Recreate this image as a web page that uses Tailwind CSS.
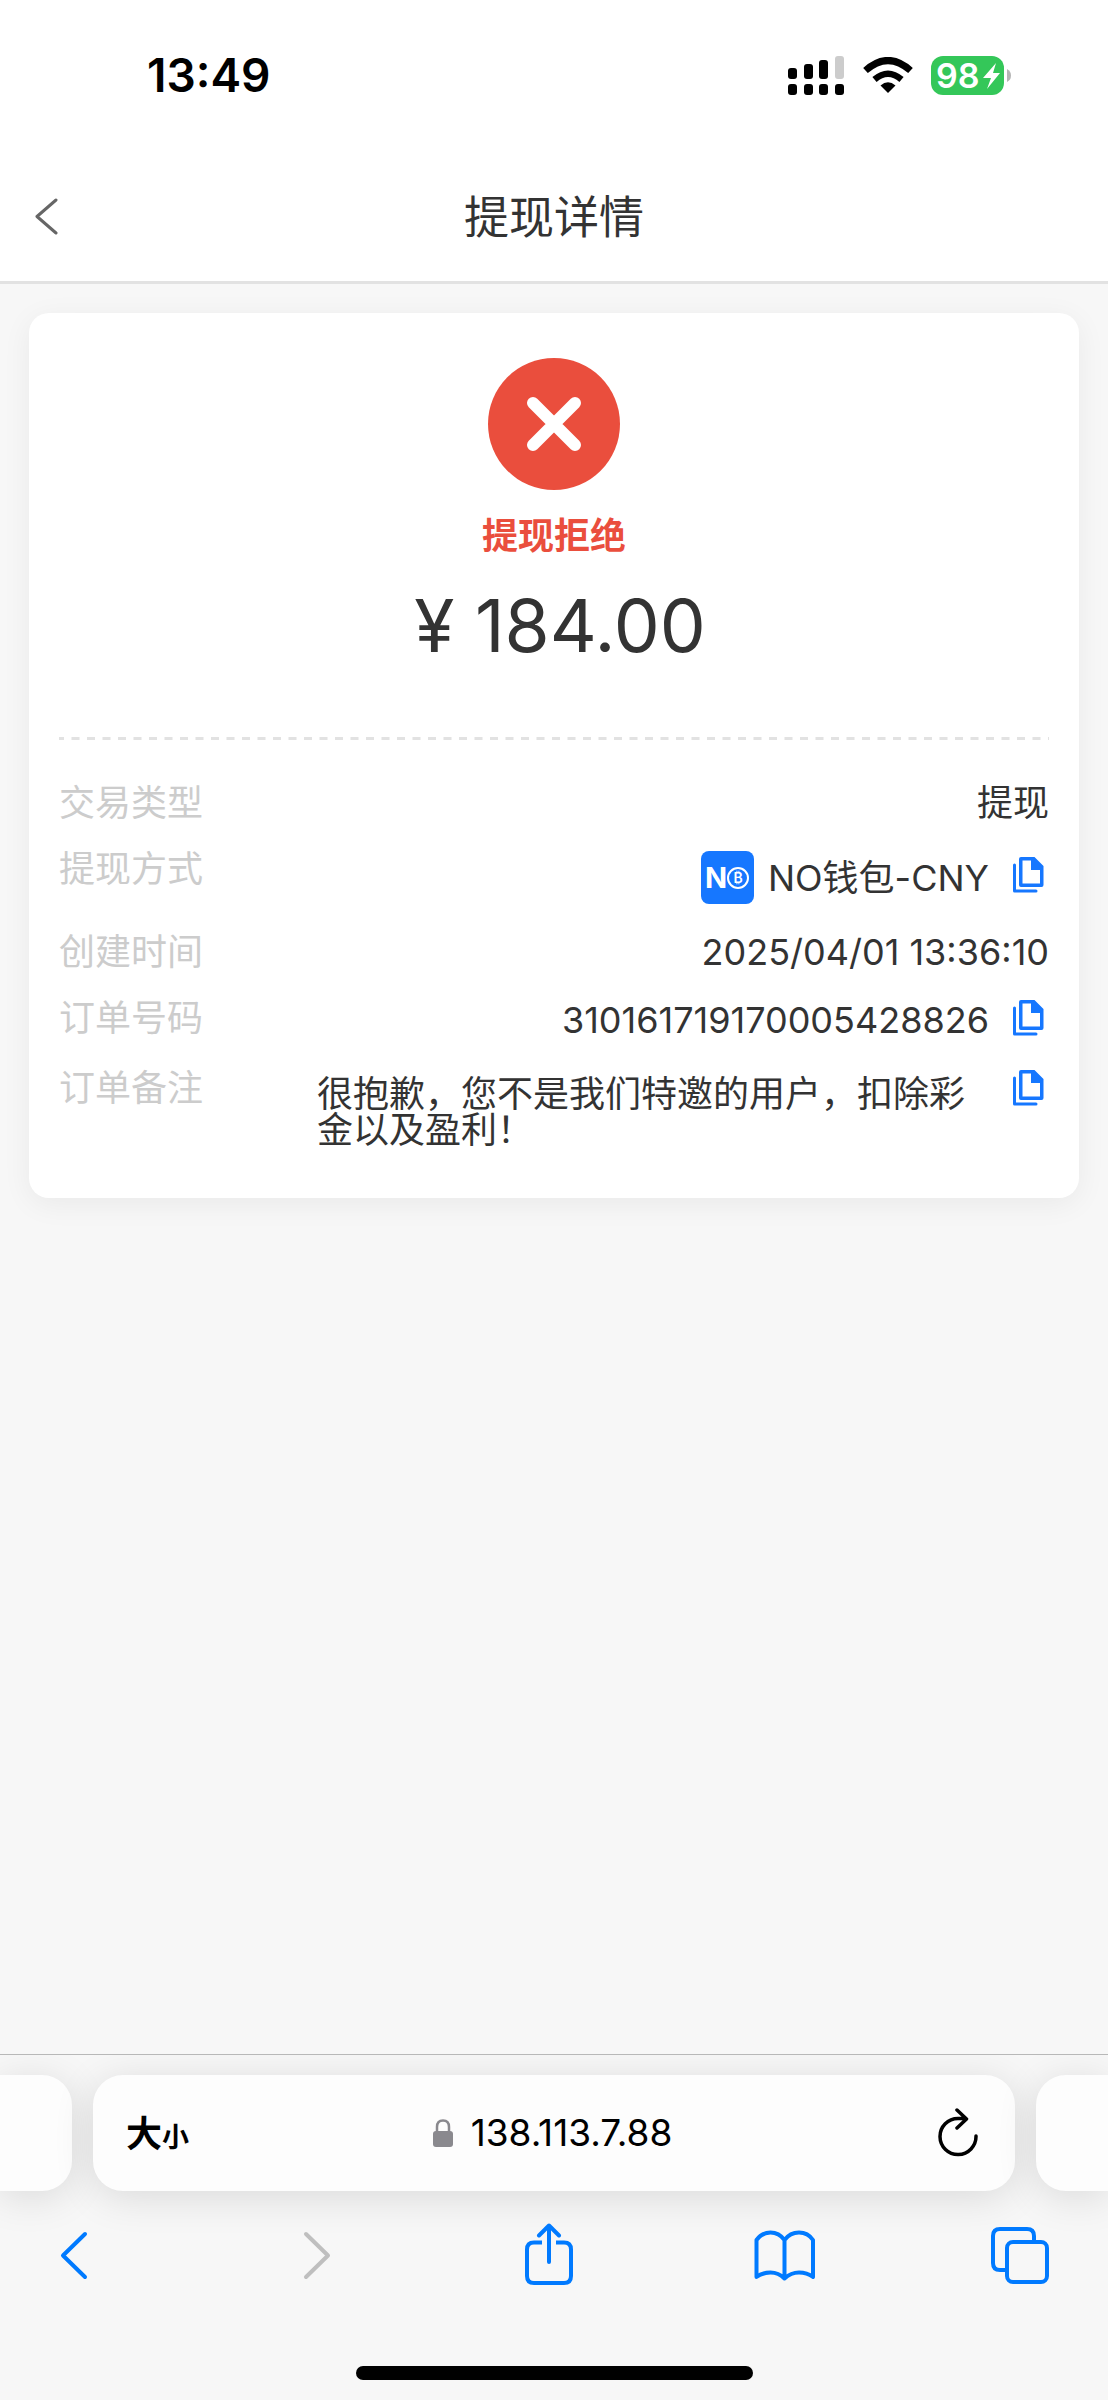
<!DOCTYPE html>
<html lang="zh-CN">
<head>
    <meta charset="UTF-8">
    <meta name="viewport" content="width=device-width, initial-scale=1.0">
    <title>提现详情</title>
    <script src="https://cdn.jsdelivr.net/npm/@tailwindcss/browser@4"></script>
</head>
<body class="bg-[#f7f7f7] font-[Inter,'Noto_Sans_CJK_SC',sans-serif] text-[36px] leading-[36px] text-[#333]">

    <!-- Shared icon shapes -->
    <svg class="hidden">
        <symbol id="copy" viewBox="0 0 36 36">
            <path d="M1.500 8v26h21.500" fill="none" stroke="#1677ff" stroke-width="3" stroke-linejoin="round" stroke-linecap="round"/>
            <path fill="#1677ff" fill-rule="evenodd" d="M8 0h13.500l9 9v19q0 2-2 2H8q-2 0-2-2V2q0-2 2-2zM9.500 3.500v23h17.500V13h-9V3.500z"/>
        </symbol>
    </svg>

    <div class="flex min-h-screen flex-col">

        <!-- Status bar -->
        <div class="flex h-[150px] items-center justify-between bg-white pr-[96px] pl-[147px]">
            <time class="text-[46px] leading-none font-semibold text-black">13:49</time>
            <div class="flex items-center gap-[18px]">
                <svg class="h-[39px] w-[57px]" viewBox="0 0 57 39">
                    <rect x="0" y="12" width="9" height="11" rx="3"/>
                    <rect x="16" y="8" width="9" height="15" rx="3"/>
                    <rect x="31" y="4" width="9" height="19" rx="3"/>
                    <rect x="47" y="0" width="9" height="23" rx="3" fill="#ccc"/>
                    <rect x="0" y="28" width="9" height="11" rx="3"/>
                    <rect x="16" y="28" width="9" height="11" rx="3"/>
                    <rect x="31" y="28" width="9" height="11" rx="3"/>
                    <rect x="47" y="28" width="9" height="11" rx="3"/>
                </svg>
                <svg class="h-[36px] w-[50px]" viewBox="0 0 50 36">
                    <path d="M25 36l-7.500-7.500q7.500-6.500 15 0z"/>
                    <path d="M11.500 22.500q13.500-11.500 27 0" fill="none" stroke="#000" stroke-width="6.500"/>
                    <path d="M2.500 13.500q22.500-20 45 0" fill="none" stroke="#000" stroke-width="7"/>
                </svg>
                <svg class="h-[39px] w-[81px] overflow-visible" viewBox="0 0 81 39">
                    <rect width="73" height="39" rx="12" fill="#34c759"/>
                    <path d="M76 13q4 2 4 6.500t-4 6.500z" fill="#b5b5b5"/>
                    <text x="5" y="32" font-size="34" font-weight="600" fill="#fff">98</text>
                    <path d="M65 7L52 22h8l-4 11 13-16h-7z" fill="#fff"/>
                </svg>
            </div>
        </div>

        <!-- Page header -->
        <header class="grid h-[134px] grid-cols-[80px_1fr_80px] items-center border-b-3 border-[#e2e2e2] bg-white">
            <button type="button" aria-label="返回" class="flex h-full items-center pl-8">
                <svg class="h-[40px] w-[26px]" viewBox="0 0 26 40" fill="none" stroke="#666" stroke-width="3" stroke-linecap="round" stroke-linejoin="round">
                    <path d="M24 4L5 20.500 24 37"/>
                </svg>
            </button>
            <h1 class="pt-1 text-center text-[45px] leading-none">提现详情</h1>
        </header>

        <!-- Detail card -->
        <main class="flex-1 px-[29px] pt-[29px]">
            <section class="rounded-[20px] bg-white px-[30px] pt-[45px] pb-[50px] shadow-[0_6px_30px_rgba(0,0,0,0.06)]">
                <div class="flex flex-col items-center">
                    <svg class="size-[132px]" viewBox="0 0 132 132">
                        <circle cx="66" cy="66" r="66" fill="#ea4e3d"/>
                        <path d="M45 45l42 42M87 45L45 87" stroke="#fff" stroke-width="12" stroke-linecap="round"/>
                    </svg>
                    <p class="mt-7 font-bold text-[#ea4e3d]">提现拒绝</p>
                    <p class="mt-9 pl-3 text-[73px] leading-[72px]">¥ 184.00</p>
                </div>

                <svg class="mt-[75px] h-[3px] w-full" aria-hidden="true">
                    <line x1="0" y1="1.500" x2="100%" y2="1.500" stroke="#e2e2e2" stroke-width="3" stroke-dasharray="8 7.500" stroke-dashoffset="3"/>
                </svg>

                <dl class="mt-[45px] flex flex-col gap-[30px]">
                    <div class="flex justify-between">
                        <dt class="text-[#ccc]">交易类型</dt>
                        <dd>提现</dd>
                    </div>
                    <div class="flex justify-between">
                        <dt class="text-[#ccc]">提现方式</dt>
                        <dd class="flex items-center">
                            <svg class="mr-[14px] size-[53px]" viewBox="0 0 53 53">
                                <rect width="53" height="53" rx="8" fill="#1677ff"/>
                                <text x="4" y="37" font-size="29" font-weight="700" fill="#fff">N</text>
                                <circle cx="37" cy="27" r="10" fill="none" stroke="#fff" stroke-width="2"/>
                                <text x="37" y="32" font-size="14" font-weight="600" text-anchor="middle" fill="#fff">₿</text>
                            </svg>
                            <span>NO钱包-CNY</span>
                            <button type="button" aria-label="复制提现方式" class="ml-6 self-start pt-1.5"><svg class="size-[36px]"><use href="#copy"/></svg></button>
                        </dd>
                    </div>
                    <div class="flex justify-between">
                        <dt class="text-[#ccc]">创建时间</dt>
                        <dd>2025/04/01 13:36:10</dd>
                    </div>
                    <div class="flex h-[40px] justify-between">
                        <dt class="text-[#ccc]">订单号码</dt>
                        <dd class="flex items-start">
                            <span class="pt-0.5">310161719170005428826</span>
                            <button type="button" aria-label="复制订单号码" class="ml-6"><svg class="size-[36px]"><use href="#copy"/></svg></button>
                        </dd>
                    </div>
                    <div class="flex">
                        <dt class="w-[258px] shrink-0 text-[#ccc]">订单备注</dt>
                        <dd class="flex flex-1 items-start justify-between">
                            <p class="flex-1 pt-1.5">很抱歉，您不是我们特邀的用户，扣除彩金以及盈利！</p>
                            <button type="button" aria-label="复制订单备注" class="ml-6"><svg class="size-[36px]"><use href="#copy"/></svg></button>
                        </dd>
                    </div>
                </dl>
            </section>
        </main>

        <!-- Browser toolbar -->
        <footer class="overflow-hidden border-t border-[#b8b8b8] pt-5">
            <div class="flex h-[116px] gap-[21px]">
                <div class="w-[72px] rounded-r-[30px] bg-[#fdfdfd] shadow-[0_6px_40px_rgba(0,0,0,0.12)]"></div>
                <div class="flex flex-1 items-center justify-between rounded-[30px] bg-[#fdfdfd] pr-[36px] pl-[33px] text-black shadow-[0_6px_40px_rgba(0,0,0,0.12)]">
                    <button type="button" aria-label="页面设置" class="flex w-[80px] items-baseline pt-1.5 font-bold">大<span class="text-[27px]">小</span></button>
                    <a href="#" class="flex items-center gap-[18px]">
                        <svg class="h-[28px] w-[20px]" viewBox="0 0 20 28">
                            <rect x="0" y="12" width="20" height="16" rx="3" fill="#8a898e"/>
                            <path d="M4 13V8q0-6.500 6-6.500T16 8v5" fill="none" stroke="#8a898e" stroke-width="2.500"/>
                        </svg>
                        <span class="text-[37px]">138.113.7.88</span>
                    </a>
                    <button type="button" aria-label="重新载入" class="flex w-[80px] justify-end">
                        <svg class="h-[50px] w-[42px]" viewBox="0 0 42 50" fill="none" stroke="#000" stroke-width="3.500" stroke-linecap="round" stroke-linejoin="round">
                            <path d="M39 28A18 18 0 1 1 21 10.500h8M20 2l9.500 9L20 20"/>
                        </svg>
                    </button>
                </div>
                <div class="w-[72px] rounded-l-[30px] bg-[#fdfdfd] shadow-[0_6px_40px_rgba(0,0,0,0.12)]"></div>
            </div>

            <nav class="mt-8 flex justify-between pr-[56px] pl-[42px]">
                <button type="button" aria-label="后退">
                    <svg class="size-[64px]" viewBox="0 0 64 64" fill="none" stroke="#007aff" stroke-width="4" stroke-linecap="round" stroke-linejoin="round"><path d="M43 11L21 32.500 43 54"/></svg>
                </button>
                <button type="button" aria-label="前进" disabled>
                    <svg class="size-[64px]" viewBox="0 0 64 64" fill="none" stroke="#bfbfbf" stroke-width="4" stroke-linecap="round" stroke-linejoin="round"><path d="M27 11l22 21.500L27 54"/></svg>
                </button>
                <button type="button" aria-label="分享">
                    <svg class="size-[64px]" viewBox="0 0 64 64" fill="none" stroke="#007aff" stroke-width="4" stroke-linejoin="round">
                        <path d="M27 19.500h-8q-7 0-7 7V53q0 7 7 7h30q7 0 7-7V26.500q0-7-7-7h-8"/>
                        <path d="M34 39V2.500M24 12.500l10-10 10 10" stroke-linecap="round"/>
                    </svg>
                </button>
                <button type="button" aria-label="书签">
                    <svg class="size-[64px]" viewBox="0 0 64 64" fill="none" stroke="#007aff" stroke-width="4" stroke-linecap="round" stroke-linejoin="round">
                        <path d="M32.500 17Q27 9.500 18.500 9.500T4.500 17v37q6-4.500 14-4.500t14 6Q39 49.500 47 49.500t14 4.500V17Q56 9.500 47 9.500T32.500 17v38.500"/>
                    </svg>
                </button>
                <button type="button" aria-label="标签页">
                    <svg class="size-[64px]" viewBox="0 0 64 64" fill="none" stroke="#007aff" stroke-width="4">
                        <path d="M19 47h-7q-7 0-7-7V13q0-7 7-7h27q7 0 7 7v6"/>
                        <rect x="19" y="19" width="40" height="40" rx="6"/>
                    </svg>
                </button>
            </nav>
            <div class="mx-auto mt-[79px] mb-5 h-[14px] w-[397px] rounded-full bg-black"></div>
        </footer>
    </div>

</body>
</html>
